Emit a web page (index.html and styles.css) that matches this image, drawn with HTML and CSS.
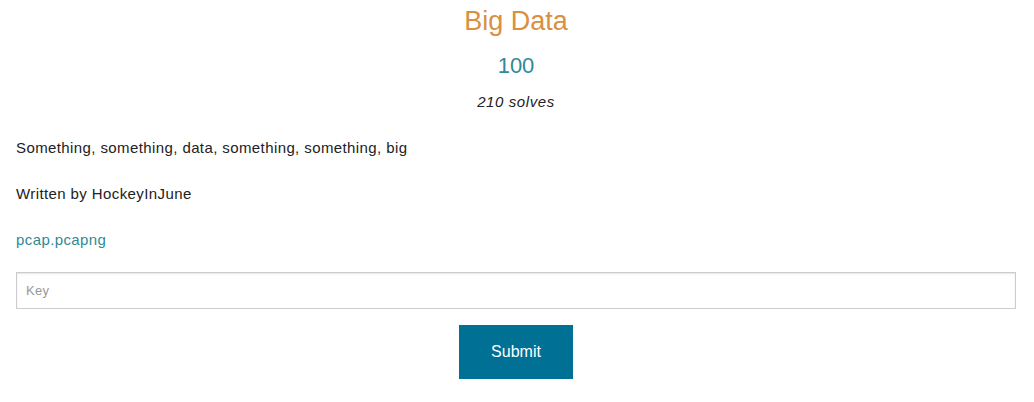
FILE: index.html
```html
<!DOCTYPE html>
<html>
<head>
<meta charset="utf-8">
<link rel="stylesheet" href="styles.css">
</head>
<body>
<div class="page">
  <h1 class="title">Big Data</h1>
  <h2 class="points">100</h2>
  <p class="solves">210 solves</p>
  <p class="desc">Something, something, data, something, something, big</p>
  <p class="desc">Written by HockeyInJune</p>
  <p class="desc"><a class="file" href="#">pcap.pcapng</a></p>
  <form class="form">
    <input class="key" type="text" placeholder="Key">
    <div class="actions"><button class="submit" type="button">Submit</button></div>
  </form>
</div>
</body>
</html>
```
FILE: styles.css
```css
html, body { margin: 0; padding: 0; background: #fff; }
body { font-family: "Liberation Sans", Arial, sans-serif; color: #222; }
.page { padding: 0 18px 0 16px; }
.title { margin: 0; padding-top: 5px; text-align: center; font-weight: normal; font-size: 27px; line-height: 32px; color: #d9903f; }
.points { margin: 16px 0 0; text-align: center; font-weight: normal; font-size: 22px; line-height: 26px; color: #2f8a96; }
.solves { margin: 13px 0 0; text-align: center; font-style: italic; font-size: 15px; line-height: 20px; letter-spacing: 0.6px; color: #222; }
.desc { margin: 26px 0 0; font-size: 15px; line-height: 20px; letter-spacing: 0.4px; }
.desc + .desc { margin-top: 26px; }
.file { color: #2f8a96; text-decoration: none; }
.form { margin-top: 22px; }
.key { display: block; box-sizing: border-box; width: 100%; height: 37px; margin: 0; padding: 0 9px; border: 1px solid #ccc; box-shadow: inset 0 1px 2px rgba(0,0,0,0.1); font-family: "Liberation Sans", Arial, sans-serif; font-size: 13px; letter-spacing: 0.3px; color: #222; outline: none; }
.key::placeholder { color: #999; }
.actions { display: flex; justify-content: center; margin-top: 16px; }
.submit { width: 114px; height: 54px; border: 0; background: #007095; color: #fff; font-family: "Liberation Sans", Arial, sans-serif; font-size: 16px; cursor: pointer; }
```
